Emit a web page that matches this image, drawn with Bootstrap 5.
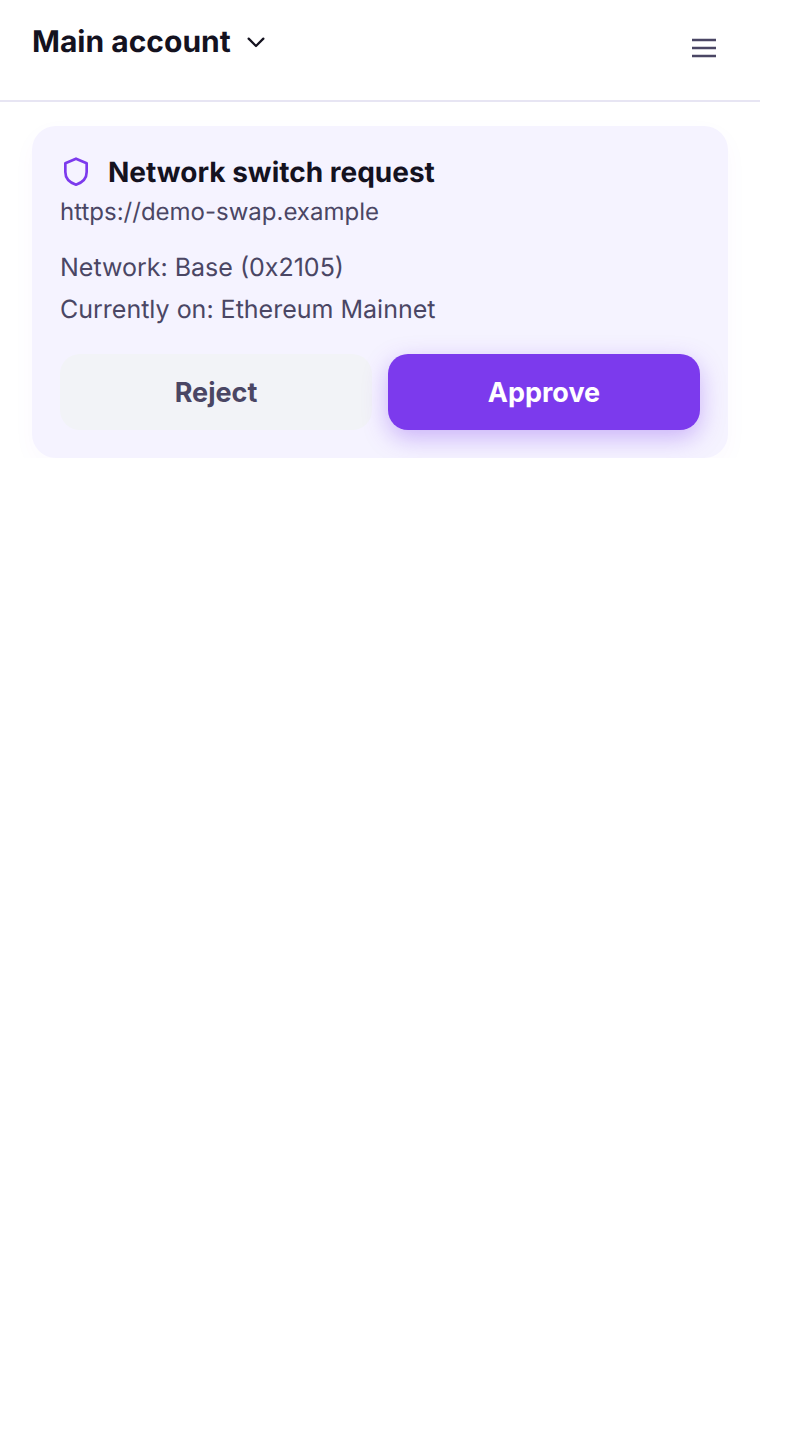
<!DOCTYPE html>
<html lang="en">
<head>
  <meta charset="UTF-8">
  <title>Network switch request</title>
  <link href="https://cdn.jsdelivr.net/npm/bootstrap@5.3.0/dist/css/bootstrap.min.css" rel="stylesheet">
  <style>
    body { font-family: Inter, "Liberation Sans", sans-serif; background: #fff; color: #14121f; text-rendering: geometricPrecision; }
    .app-shell { width: 760px; }
    .top-bar { height: 102px; padding: 24px 40px 0 32px; border-bottom: 2px solid #e7e5f3; }
    .account-name { font-size: 30px; font-weight: 700; line-height: 36px; color: #14121f; }
    .account-caret { margin-left: 1px; }
    .request-box { margin: 24px 32px 0; padding: 28px; background: #f5f3ff; border-radius: 24px; box-shadow: 0 8px 24px rgba(124, 58, 237, .03); }
    .request-title { font-size: 28px; font-weight: 700; line-height: 36px; }
    .request-url { font-size: 24px; line-height: 42px; margin-top: 1px; color: #4a4664; }
    .request-text { font-size: 25px; line-height: 42px; color: #4a4664; }
    .request-details { margin-top: 14px; }
    .action-row { margin-top: 23px; }
    .action-btn { height: 76px; padding: 3px 6px 1px; border-radius: 20px; border: 0; font-size: 27px; font-weight: 700; }
    .btn-reject { background: #f2f3f7; color: #4a4664; }
    .btn-approve { background: #7c3aed; color: #fff; box-shadow: 0 8px 24px rgba(124, 58, 237, .35); }
  </style>
</head>
<body>
  <div class="app-shell">
    <div class="top-bar d-flex justify-content-between align-items-start">
      <div class="d-flex align-items-center gap-2">
        <span class="account-name">Main account</span>
        <svg class="account-caret" width="32" height="32" viewBox="0 0 24 24" fill="none" stroke="#14121f" stroke-width="1.7" stroke-linecap="round" stroke-linejoin="round"><path d="M6.500 9.500l5.500 5.500 5.500-5.500"/></svg>
      </div>
      <svg class="mt-2" width="32" height="32" viewBox="0 0 32 32" fill="none" stroke="#4a4664" stroke-width="2.6"><path d="M4 8h24M4 16h24M4 24h24"/></svg>
    </div>
    <div class="request-box">
      <div class="d-flex align-items-center gap-3">
        <svg width="32" height="32" viewBox="0 0 24 24" fill="none" stroke="#7c3aed" stroke-width="2" stroke-linejoin="round"><path d="M12 2l8 3.500v6.500c0 5-3.400 8-8 9.500-4.600-1.500-8-4.500-8-9.500V5.500z"/></svg>
        <span class="request-title">Network switch request</span>
      </div>
      <div class="request-url">https://demo-swap.example</div>
      <div class="request-details">
        <div class="request-text">Network: Base (0x2105)</div>
        <div class="request-text">Currently on: Ethereum Mainnet</div>
      </div>
      <div class="action-row d-flex gap-3">
        <button class="action-btn btn-reject w-50">Reject</button>
        <button class="action-btn btn-approve w-50">Approve</button>
      </div>
    </div>
  </div>
  <script src="https://cdn.jsdelivr.net/npm/bootstrap@5.3.0/dist/js/bootstrap.bundle.min.js"></script>
</body>
</html>
